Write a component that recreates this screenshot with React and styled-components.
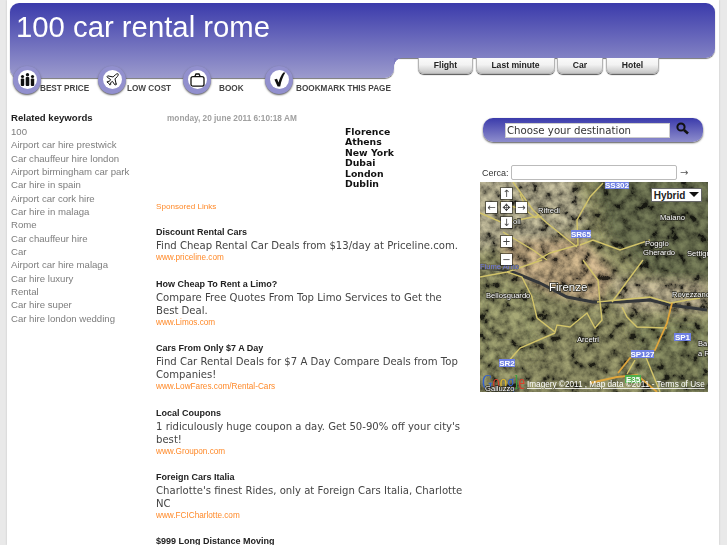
import React from 'react'
import styled, { createGlobalStyle } from 'styled-components'
import { Plane } from 'lucide-react'

const GlobalStyle = createGlobalStyle`
  html, body {
    margin: 0;
    padding: 0;
    background: #e9e9e9;
    font-family: "Liberation Sans", Arial, sans-serif;
  }
  body { height: 545px; overflow: hidden; }
`

const Page = styled.div`
  width: 712px;
  height: 545px;
  margin-left: 7px;
  background: #fff;
  overflow: hidden;
  box-shadow: 0 0 2px #c4c4c4;
`

const BLUE = 'linear-gradient(180deg, #3b3bab 0%, #9c9bcd 100%)'

const Header = styled.header`
  margin: 3px 4px 0 3px;
`

const TopBand = styled.div`
  height: 55px;
  box-sizing: border-box;
  padding: 7px 0 0 6px;
  background: ${BLUE};
  background-size: 100% 75px;
  border-radius: 9px 9px 9px 0;
  box-shadow: 0 1px 1px #777;
`

const Title = styled.h1`
  margin: 0;
  color: #fff;
  font-size: 29.3px;
  line-height: 34px;
  font-weight: normal;
`

const SubRow = styled.div`
  display: flex;
  height: 20px;
`

const LowerBand = styled.nav`
  position: relative;
  z-index: 2;
  display: flex;
  width: 384px;
  height: 20px;
  box-sizing: border-box;
  padding: 8px 0 0 3px;
  background: ${BLUE};
  background-size: 100% 75px;
  background-position: 0 -55px;
  border-radius: 0 0 9px 9px;
  box-shadow: 0 1px 1px #777;

  &::after {
    content: '';
    position: absolute;
    left: 100%;
    top: 0;
    width: 8px;
    height: 8px;
    background: radial-gradient(circle at 100% 100%, transparent 7.5px, #7c7ac0 8px);
  }
`

const NavItem = styled.a`
  display: flex;
  align-items: flex-end;
  flex: none;
  width: ${p => p.$width}px;
  height: 28px;
`

const IconRing = styled.span`
  display: flex;
  align-items: center;
  justify-content: center;
  flex: none;
  width: 28px;
  height: 28px;
  box-sizing: border-box;
  padding-bottom: 1px;
  border-radius: 50%;
  background: #9290ce;
  box-shadow: 0 1px 2px #555;
`

const IconDisc = styled.span`
  display: flex;
  align-items: center;
  justify-content: center;
  width: 19px;
  height: 19px;
  border-radius: 50%;
  background: #fff;
  color: #111;
`

const NavLabel = styled.span`
  margin-left: ${p => p.$gap}px;
  color: #444;
  font-size: 8.2px;
  font-weight: bold;
  line-height: 10px;
  white-space: nowrap;
`

const Tabs = styled.div`
  display: flex;
  margin-left: 24px;
`

const Tab = styled.a`
  width: ${p => p.$width}px;
  height: 16px;
  box-sizing: border-box;
  margin-right: ${p => p.$after}px;
  border: 1px solid #b4b4b4;
  border-top: 0;
  border-radius: 0 0 6px 6px;
  background: linear-gradient(180deg, #fafafa 0%, #f2f2f2 45%, #c6c6c6 100%);
  box-shadow: 0 1px 1px #555;
  color: #222;
  font-size: 8.6px;
  font-weight: bold;
  line-height: 15px;
  text-align: center;
`

const Main = styled.main`
  display: grid;
  grid-template-columns: 145px 324px 228px;
  margin: 33px 0 0 4px;
`

const Sidebar = styled.aside`
  padding-top: 0;
`

const SideTitle = styled.div`
  color: #222;
  font-size: 9.6px;
  font-weight: bold;
  line-height: 13px;
`

const KeywordList = styled.ul`
  margin: 1px 0 0;
  padding: 0;
  list-style: none;
`

const Keyword = styled.li`
  color: #7d7d7d;
  font-size: 9.6px;
  line-height: 13.33px;
`

const Center = styled.section`
  width: 308px;
`

const DateLine = styled.div`
  margin: 1px 0 0 11px;
  color: #a0a0a0;
  font-size: 8.25px;
  font-weight: bold;
  line-height: 13px;
`

const CityList = styled.div`
  margin: 2px 0 0 189px;
  color: #111;
  font-family: "DejaVu Sans", Verdana, sans-serif;
  font-size: 9.3px;
  font-weight: bold;
  line-height: 10.4px;
`

const Sponsored = styled.div`
  margin: 11px 0 13px;
  color: #ff8a2a;
  font-size: 8.1px;
  line-height: 13px;
`

const Ad = styled.article`
  margin-bottom: 13px;
`

const AdTitle = styled.div`
  color: #222;
  font-size: 9px;
  font-weight: bold;
  line-height: 13px;
`

const AdText = styled.div`
  color: #444;
  font-family: "DejaVu Sans", Verdana, sans-serif;
  font-size: 10.1px;
  line-height: 13px;
`

const AdUrl = styled.div`
  color: #ff8a2a;
  font-size: 8.2px;
  line-height: 12.4px;
`

const RightCol = styled.section`
  padding-top: 7px;
`

const SearchBar = styled.div`
  display: flex;
  align-items: center;
  width: 220px;
  height: 24px;
  box-sizing: border-box;
  margin-left: 3px;
  padding-left: 22px;
  border-radius: 10px;
  background: linear-gradient(180deg, #3b3bab 0%, #8e8dcc 100%);
  box-shadow: 0 1px 2px #555;
`

const DestinationBox = styled.div`
  width: 165px;
  height: 15px;
  box-sizing: border-box;
  padding-left: 1px;
  border: 1px solid #ccc;
  background: #fff;
  color: #333;
  font-family: "DejaVu Sans", Verdana, sans-serif;
  font-size: 10.2px;
  line-height: 13px;
  white-space: nowrap;
`

const SearchGlyph = styled.svg`
  margin-left: 6px;
  margin-top: -3px;
`

const CercaRow = styled.div`
  display: flex;
  align-items: center;
  height: 15px;
  margin: 23px 0 2px 2px;
`

const CercaLabel = styled.label`
  width: 29px;
  color: #333;
  font-size: 9px;
`

const CercaInput = styled.div`
  width: 166px;
  height: 15px;
  box-sizing: border-box;
  border: 1px solid #bbb;
  border-radius: 2px;
  background: #fff;
`

const CercaGo = styled.span`
  margin-left: 3px;
  color: #555;
  font-family: "DejaVu Sans", sans-serif;
  font-size: 10px;
  line-height: 12px;
`

const MapFrame = styled.div`
  position: relative;
  width: 228px;
  height: 210px;
  overflow: hidden;
  background: #6e6d50;
`

const MapSvg = styled.svg`
  display: block;
`

const Noise = styled.rect`
  mix-blend-mode: overlay;
`

const PlaceLabel = styled.text`
  fill: ${p => p.$fill || '#fff'};
  stroke: ${p => p.$halo || '#2a2a20'};
  stroke-width: 1.4px;
  paint-order: stroke;
  font-family: "Liberation Sans", Arial, sans-serif;
  font-size: ${p => p.$size || 7.6}px;
`

const BadgeText = styled.text`
  fill: #fff;
  font-family: "Liberation Sans", Arial, sans-serif;
  font-size: 8px;
  font-weight: bold;
  text-anchor: middle;
`

const LogoText = styled.text`
  font-family: "Liberation Serif", serif;
  font-size: 20px;
`

const TermsText = styled.text`
  fill: #fff;
  font-family: "Liberation Sans", Arial, sans-serif;
  font-size: 8.2px;
  text-decoration: underline;
`

const MapControls = styled.div`
  position: absolute;
  left: 6px;
  top: 6px;
  display: grid;
  grid-template-columns: repeat(3, 11px);
  grid-template-rows: 11px 11px 11px 11px 11px;
  column-gap: 4px;
  row-gap: 3px;
`

const MapButton = styled.button`
  grid-column: ${p => p.$col};
  grid-row: ${p => p.$row};
  margin-top: ${p => p.$shift || 0}px;
  display: flex;
  align-items: center;
  justify-content: center;
  width: 11px;
  height: 11px;
  padding: 0;
  border: 0;
  background: #fff;
  box-shadow: 0 0 0 1px rgba(0, 0, 0, 0.45);
  color: #444;
  font-family: "DejaVu Sans", sans-serif;
  font-size: 10px;
  line-height: 11px;
`

const HybridButton = styled.div`
  position: absolute;
  top: 6px;
  left: 171px;
  display: flex;
  align-items: center;
  justify-content: center;
  gap: 4px;
  width: 51px;
  height: 14px;
  box-sizing: border-box;
  border: 1px solid #666;
  background: #fff;
  color: #222;
  font-size: 10px;
  font-weight: bold;
`

const HybridArrow = styled.span`
  width: 0;
  height: 0;
  margin-top: -2px;
  border-left: 5px solid transparent;
  border-right: 5px solid transparent;
  border-top: 5px solid #111;
`

const navItems = [
  { label: 'BEST PRICE', width: 85, gap: -1, icon: 'people' },
  { label: 'LOW COST', width: 85, gap: 1, icon: 'plane' },
  { label: 'BOOK', width: 82, gap: 8, icon: 'bag' },
  { label: 'BOOKMARK THIS PAGE', width: 126, gap: 3, icon: 'check' },
]

const tabs = [
  { label: 'Flight', width: 55, after: 3 },
  { label: 'Last minute', width: 79, after: 2 },
  { label: 'Car', width: 46, after: 3 },
  { label: 'Hotel', width: 53, after: 0 },
]

const keywords = [
  '100',
  'Airport car hire prestwick',
  'Car chauffeur hire london',
  'Airport birmingham car park',
  'Car hire in spain',
  'Airport car cork hire',
  'Car hire in malaga',
  'Rome',
  'Car chauffeur hire',
  'Car',
  'Airport car hire malaga',
  'Car hire luxury',
  'Rental',
  'Car hire super',
  'Car hire london wedding',
]

const cities = ['Florence', 'Athens', 'New York', 'Dubai', 'London', 'Dublin']

const ads = [
  {
    title: 'Discount Rental Cars',
    text: 'Find Cheap Rental Car Deals from $13/day at Priceline.com.',
    url: 'www.priceline.com',
  },
  {
    title: 'How Cheap To Rent a Limo?',
    text: 'Compare Free Quotes From Top Limo Services to Get the Best Deal.',
    url: 'www.Limos.com',
  },
  {
    title: 'Cars From Only $7 A Day',
    text: 'Find Car Rental Deals for $7 A Day Compare Deals from Top Companies!',
    url: 'www.LowFares.com/Rental-Cars',
  },
  {
    title: 'Local Coupons',
    text: "1 ridiculously huge coupon a day. Get 50-90% off your city's best!",
    url: 'www.Groupon.com',
  },
  {
    title: 'Foreign Cars Italia',
    text: "Charlotte's finest Rides, only at Foreign Cars Italia, Charlotte NC",
    url: 'www.FCICharlotte.com',
  },
  { title: '$999 Long Distance Moving', text: '', url: '' },
]

const NavIcon = ({ name }) => {
  if (name === 'plane') return <Plane size={15} strokeWidth={1.6} />
  if (name === 'people') {
    return (
      <svg width="15" height="13" viewBox="0 0 15 13" fill="currentColor">
        <circle cx="2.5" cy="3.5" r="1.6" />
        <circle cx="7.5" cy="1.8" r="1.7" />
        <circle cx="12.5" cy="3.5" r="1.6" />
        <rect x="0.8" y="5.6" width="3.4" height="7.4" rx="1" />
        <rect x="5.7" y="4" width="3.6" height="9" rx="1" />
        <rect x="10.8" y="5.6" width="3.4" height="7.4" rx="1" />
      </svg>
    )
  }
  if (name === 'bag') {
    return (
      <svg width="15" height="14" viewBox="0 0 15 14" fill="none" stroke="currentColor" strokeWidth="1.3">
        <rect x="1" y="3.6" width="13" height="9.6" rx="2" />
        <path d="M4.8 3.6 L6 1 H9 L10.2 3.6" />
      </svg>
    )
  }
  return (
    <svg width="13" height="15" viewBox="0 0 13 15" fill="currentColor">
      <path d="M1.4 7.6 L4 6.8 L5.6 10.4 C6.6 6.6 8.2 3 10.4 0.6 L12.4 0.6 C10 4.4 8.2 9.2 7.2 14.6 L4.6 14.6 Z" />
    </svg>
  )
}

const roads = [
  'M33 0 L53 28 L67 41 L97 65',
  'M0 31 L23 41 L53 35 L62 35',
  'M123 1 L110 15 L97 38 L98 63 L70 71 L57 78',
  'M100 63 L113 58 L140 68 L170 58',
  'M23 50 L53 68 L67 78',
  'M0 95 L27 90 L62 78',
  'M103 78 L118 98 L120 120',
  'M163 78 L132 120',
  'M117 120 L170 115 L190 121 L220 116',
  'M120 120 L122 138 L115 146 L107 131 L90 145 L77 143 L75 150 L57 136 L52 115 L42 95 L27 90',
  'M75 151 L40 166 L27 181',
  'M142 125 L147 135 L157 145 L187 146',
  'M180 210 L163 168 M155 178 L147 192',
  'M20 20 L48 30 L56 36 L60 28 M48 30 L40 12',
]

const MapDrawing = () => (
  <MapSvg width="228" height="210" viewBox="0 0 228 210">
    <defs>
      <filter id="soft" x="-20%" y="-20%" width="140%" height="140%">
        <feGaussianBlur stdDeviation="5" />
      </filter>
      <filter id="grain">
        <feTurbulence type="fractalNoise" baseFrequency="0.1" numOctaves="4" seed="7" />
        <feColorMatrix type="matrix" values="1.9 0 0 0 -0.5  1.9 0 0 0 -0.5  1.9 0 0 0 -0.5  0 0 0 0 1" />
      </filter>
    </defs>
    <rect width="228" height="210" fill="#5f5f43" />
    <g filter="url(#soft)">
      <path d="M112 -10 L240 -10 L240 100 L175 95 L130 55 Z" fill="#474b34" />
      <path d="M-10 -10 L90 -10 L110 40 L60 60 L-10 70 Z" fill="#77735f" />
      <path d="M20 60 L100 55 L135 90 L120 122 L70 112 L30 90 Z" fill="#806f56" />
      <path d="M130 95 L228 100 L228 130 L140 128 Z" fill="#78715c" />
      <path d="M0 100 L50 110 L60 170 L0 190 Z" fill="#626344" />
      <path d="M150 140 L228 140 L228 210 L170 210 Z" fill="#55593e" />
    </g>
    <Noise width="228" height="210" filter="url(#grain)" opacity="0.7" />
    <path
      d="M0 86 L27 88 L40 93 L60 101 L87 115 L113 120 L140 120 L170 118 L190 123 L227 128"
      fill="none"
      stroke="#34373a"
      strokeWidth="3"
    />
    <g fill="none" stroke="#d2c46a" strokeWidth="1.4">
      {roads.map(d => (
        <path key={d} d={d} />
      ))}
    </g>
    <g fill="none" stroke="#e0a63c" strokeWidth="1.8">
      <path d="M192 121 L187 141 L175 168 L150 176 L138 191" />
      <path d="M110 201 L137 195 L157 193 L177 210" />
    </g>

    <PlaceLabel x="58" y="31">Rifredi</PlaceLabel>
    <PlaceLabel x="180" y="38">Maiano</PlaceLabel>
    <PlaceLabel x="165" y="64">Poggio</PlaceLabel>
    <PlaceLabel x="163" y="73">Gherardo</PlaceLabel>
    <PlaceLabel x="207" y="74">Settign</PlaceLabel>
    <PlaceLabel x="33" y="42">oli</PlaceLabel>
    <PlaceLabel x="0" y="87" $fill="#6f78e0" $halo="#6b6a50">Fiume Arno</PlaceLabel>
    <PlaceLabel x="69" y="109" $size="11.5">Firenze</PlaceLabel>
    <PlaceLabel x="6" y="116">Bellosguardo</PlaceLabel>
    <PlaceLabel x="192" y="115">Rovezzano</PlaceLabel>
    <PlaceLabel x="97" y="160">Arcetri</PlaceLabel>
    <PlaceLabel x="218" y="164">Ba</PlaceLabel>
    <PlaceLabel x="218" y="174">a R</PlaceLabel>

    <rect x="125" y="-2" width="24" height="9" fill="#6f80e2" />
    <BadgeText x="137" y="6">SS302</BadgeText>
    <rect x="91" y="48" width="20" height="8" fill="#6f80e2" />
    <BadgeText x="101" y="55">SR65</BadgeText>
    <rect x="194" y="151" width="17" height="8" fill="#6f80e2" />
    <BadgeText x="202.5" y="158">SP1</BadgeText>
    <rect x="151" y="168" width="23" height="8" fill="#6f80e2" />
    <BadgeText x="162.5" y="175">SP127</BadgeText>
    <rect x="19" y="177" width="16" height="8" fill="#6f80e2" />
    <BadgeText x="27" y="184">SR2</BadgeText>
    <rect x="145" y="193" width="16" height="8" fill="#4fae4a" />
    <BadgeText x="153" y="200">E35</BadgeText>

    <LogoText x="2" y="207" textLength="43" lengthAdjust="spacingAndGlyphs">
      <tspan fill="#2f5fd0">G</tspan>
      <tspan fill="#d8402c">o</tspan>
      <tspan fill="#e3b92c">o</tspan>
      <tspan fill="#2f5fd0">g</tspan>
      <tspan fill="#3f9d3f">l</tspan>
      <tspan fill="#d8402c">e</tspan>
    </LogoText>
    <PlaceLabel x="5" y="209">Galluzzo</PlaceLabel>
    <TermsText x="47" y="205">Imagery ©2011 , Map data ©2011 - Terms of Use</TermsText>
  </MapSvg>
)

const App = () => (
  <Page>
    <GlobalStyle />
    <Header>
      <TopBand>
        <Title>100 car rental rome</Title>
      </TopBand>
      <SubRow>
        <LowerBand>
          {navItems.map(item => (
            <NavItem key={item.label} $width={item.width}>
              <IconRing>
                <IconDisc>
                  <NavIcon name={item.icon} />
                </IconDisc>
              </IconRing>
              <NavLabel $gap={item.gap}>{item.label}</NavLabel>
            </NavItem>
          ))}
        </LowerBand>
        <Tabs>
          {tabs.map(tab => (
            <Tab key={tab.label} $width={tab.width} $after={tab.after}>
              {tab.label}
            </Tab>
          ))}
        </Tabs>
      </SubRow>
    </Header>

    <Main>
      <Sidebar>
        <SideTitle>Related keywords</SideTitle>
        <KeywordList>
          {keywords.map(k => (
            <Keyword key={k}>{k}</Keyword>
          ))}
        </KeywordList>
      </Sidebar>

      <Center>
        <DateLine>monday, 20 june 2011 6:10:18 AM</DateLine>
        <CityList>
          {cities.map(c => (
            <div key={c}>{c}</div>
          ))}
        </CityList>
        <Sponsored>Sponsored Links</Sponsored>
        {ads.map(ad => (
          <Ad key={ad.title}>
            <AdTitle>{ad.title}</AdTitle>
            <AdText>{ad.text}</AdText>
            <AdUrl>{ad.url}</AdUrl>
          </Ad>
        ))}
      </Center>

      <RightCol>
        <SearchBar>
          <DestinationBox>Choose your destination</DestinationBox>
          <SearchGlyph width="13" height="13" viewBox="0 0 13 13" fill="none" stroke="#111">
            <circle cx="5" cy="5" r="3.6" strokeWidth="2" />
            <path d="M8 8 L12 11.5" strokeWidth="2.6" />
          </SearchGlyph>
        </SearchBar>
        <CercaRow>
          <CercaLabel>Cerca:</CercaLabel>
          <CercaInput />
          <CercaGo>→</CercaGo>
        </CercaRow>
        <MapFrame>
          <MapDrawing />
          <MapControls>
            <MapButton $col={2} $row={1}>↑</MapButton>
            <MapButton $col={1} $row={2}>←</MapButton>
            <MapButton $col={2} $row={2}>✥</MapButton>
            <MapButton $col={3} $row={2}>→</MapButton>
            <MapButton $col={2} $row={3} $shift={1}>↓</MapButton>
            <MapButton $col={2} $row={4} $shift={6}>+</MapButton>
            <MapButton $col={2} $row={5} $shift={10}>−</MapButton>
          </MapControls>
          <HybridButton>
            Hybrid
            <HybridArrow />
          </HybridButton>
        </MapFrame>
      </RightCol>
    </Main>
  </Page>
)

export default App
